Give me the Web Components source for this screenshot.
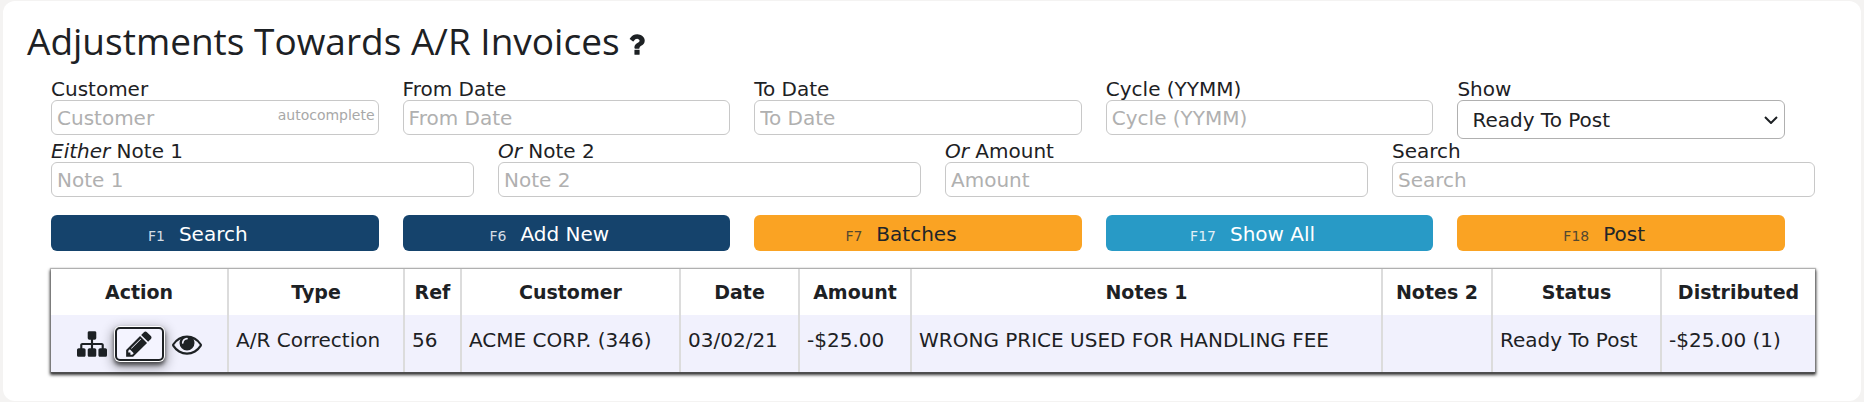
<!DOCTYPE html>
<html lang="en">
<head>
<meta charset="utf-8">
<title>Adjustments Towards A/R Invoices</title>
<style>
  html { background: #f4f3f2; }
  body { margin: 0; padding: 1px 3px; font: 20px/23px "DejaVu Sans", Verdana, sans-serif; color: #1d2124; }
</style>
</head>
<body>
<page-card>
  <span slot="title">Adjustments Towards A/R Invoices</span>
  <field-row inset>
    <text-field placeholder="Customer" hint="autocomplete">Customer</text-field>
    <text-field placeholder="From Date">From Date</text-field>
    <text-field placeholder="To Date">To Date</text-field>
    <text-field placeholder="Cycle (YYMM)">Cycle (YYMM)</text-field>
    <select-field options="Ready To Post">Show</select-field>
  </field-row>
  <field-row>
    <text-field placeholder="Note 1"><i>Either</i> Note 1</text-field>
    <text-field placeholder="Note 2"><i>Or</i> Note 2</text-field>
    <text-field placeholder="Amount"><i>Or</i> Amount</text-field>
    <text-field placeholder="Search">Search</text-field>
  </field-row>
  <field-row inset spaced>
    <key-button key="F1">Search</key-button>
    <key-button key="F6">Add New</key-button>
    <key-button key="F7" tone="amber">Batches</key-button>
    <key-button key="F17" tone="sky">Show All</key-button>
    <key-button key="F18" tone="amber">Post</key-button>
  </field-row>
  <adjustment-table></adjustment-table>
</page-card>

<script>
const ICONS = {
  sitemap: "M1792 1248v320q0 40-28 68t-68 28h-320q-40 0-68-28t-28-68v-320q0-40 28-68t68-28h96v-192h-512v192h96q40 0 68 28t28 68v320q0 40-28 68t-68 28h-320q-40 0-68-28t-28-68v-320q0-40 28-68t68-28h96v-192h-512v192h96q40 0 68 28t28 68v320q0 40-28 68t-68 28h-320q-40 0-68-28t-28-68v-320q0-40 28-68t68-28h96v-192q0-52 38-90t90-38h512v-192h-96q-40 0-68-28t-28-68v-320q0-40 28-68t68-28h320q40 0 68 28t28 68v320q0 40-28 68t-68 28h-96v192h512q52 0 90 38t38 90v192h96q40 0 68 28t28 68z",
  eye: "M1664 960q-152-236-381-353 61 104 61 225 0 185-131.5 316.5t-316.5 131.5-316.5-131.5-131.5-316.5q0-121 61-225-229 117-381 353 133 205 333.5 326.5t434.5 121.5 434.5-121.5 333.5-326.5zm-720-384q0-20-14-34t-34-14q-125 0-214.5 89.5t-89.5 214.5q0 20 14 34t34 14 34-14 14-34q0-86 61-147t147-61q20 0 34-14t14-34zm848 384q0 34-20 69-140 230-376.5 368.5t-499.5 138.5-499.5-139-376.5-368q-20-35-20-69t20-69q140-229 376.5-368t499.5-139 499.5 139 376.5 368q20 35 20 69z",
  pencil: "M491 1536l91-91-235-235-91 91v107h128v128h107zm523-928q0-22-22-22-10 0-17 7l-542 542q-7 7-7 17 0 22 22 22 10 0 17-7l542-542q7-7 7-17zm-54-192l416 416-832 832h-416v-416zm683 96q0 53-37 90l-166 166-416-416 166-165q36-38 90-38 53 0 91 38l235 234q37 39 37 91z",
  question: "M1088 1256v240q0 16-12 28t-28 12h-240q-16 0-28-12t-12-28v-240q0-16 12-28t28-12h240q16 0 28 12t12 28zm316-600q0 54-15.5 101t-35 76.5-55 59.5-57.5 43.5-61 35.5q-41 23-68.5 65t-27.5 67q0 17-12 32.5t-28 15.5h-240q-15 0-25.5-18.5t-10.5-37.5v-45q0-83 65-156.5t143-108.5q59-27 84-56t25-76q0-42-46.5-74t-107.5-32q-65 0-108 29-35 25-107 115-13 16-31 16-12 0-25-8l-164-125q-13-10-15.5-25t5.5-28q160-266 464-266 80 0 161 31t146 83 106 127.5 41 158.5z"
};

class Base extends HTMLElement {
  constructor() { super(); this.attachShadow({ mode: "open" }); }
  connectedCallback() { this.shadowRoot.innerHTML = this.render(); }
  attr(name) { return this.getAttribute(name) || ""; }
}

customElements.define("app-icon", class extends Base {
  render() {
    return `<style>:host{display:block;width:30px;height:30px}svg{display:block;width:100%;height:100%;fill:currentColor}</style>
      <svg viewBox="0 0 1792 1792" aria-hidden="true"><path d="${ICONS[this.attr("name")]}"/></svg>`;
  }
});

customElements.define("page-card", class extends Base {
  render() {
    return `<style>
      :host{display:block;background:#fff;border-radius:12px;padding:12px 46px 29px 48px}
      header{display:flex;align-items:center;gap:2px;margin:0 0 8px -24px}
      h1{margin:0;font:400 37px/56px "Open Sans","Noto Sans",sans-serif}
      a{color:inherit;margin-top:6px}
      app-icon{width:29px;height:29px}
      </style>
      <header><h1><slot name="title"></slot></h1><a href="#help" aria-label="Help"><app-icon name="question"></app-icon></a></header>
      <slot></slot>`;
  }
});

customElements.define("field-row", class extends Base {
  render() {
    return `<style>
      :host{display:grid;grid-auto-flow:column;grid-auto-columns:minmax(0,1fr);gap:24px}
      :host([inset]){margin-right:30px}
      :host([spaced]){margin-top:18px;margin-bottom:18px}
      </style><slot></slot>`;
  }
});

customElements.define("text-field", class extends Base {
  render() {
    const hint = this.attr("hint");
    return `<style>
      :host{display:block}
      label{display:block;padding-top:2px;line-height:21px}
      .box{position:relative}
      input{display:block;box-sizing:border-box;width:100%;height:35px;margin:0;padding:0 5px;border:1px solid #c8c8c8;border-radius:6px;background:#fff;font:inherit;color:inherit}
      input::placeholder{color:#b0b0b0;opacity:1}
      .hint{position:absolute;right:4px;top:5px;font-size:14px;line-height:20px;color:#a8a8a8}
      </style>
      <label for="f"><slot></slot></label>
      <div class="box"><input id="f" type="text" placeholder="${this.attr("placeholder")}">${hint ? `<span class="hint">${hint}</span>` : ""}</div>`;
  }
});

customElements.define("select-field", class extends Base {
  render() {
    return `<style>
      :host{display:block}
      label{display:block;padding-top:2px;line-height:21px}
      .box{display:grid;align-items:center}
      select,svg{grid-area:1/1}
      select{appearance:none;box-sizing:border-box;width:100%;height:39px;margin:0;padding:2px 32px 0 14px;border:1px solid #b0b0b0;border-radius:6px;background:#fff;font:inherit;color:inherit}
      svg{justify-self:end;margin-right:7px;width:14px;height:8px;pointer-events:none;fill:none;stroke:#1d2124;stroke-width:2}
      </style>
      <label for="s"><slot></slot></label>
      <div class="box"><select id="s">${this.attr("options").split(",").map(o => `<option>${o}</option>`).join("")}</select>
      <svg viewBox="0 0 14 8" aria-hidden="true"><path d="M1 1l6 6 6-6"/></svg></div>`;
  }
});

customElements.define("key-button", class extends Base {
  render() {
    return `<style>
      :host{display:block;--bg:#15436c;--fg:#fff;--key:#d5dde5}
      :host([tone=amber]){--bg:#faa323;--fg:#212529;--key:#54482f}
      :host([tone=sky]){--bg:#289ac6;--fg:#fff;--key:#e0f0f7}
      button{display:flex;justify-content:center;align-items:baseline;gap:14px;width:100%;height:36px;margin:0;padding:8px 34px 0 0;border:0;border-radius:6px;background:var(--bg);color:var(--fg);font:inherit}
      small{font-size:14px;color:var(--key)}
      </style>
      <button type="button"><small>${this.attr("key")}</small><span><slot></slot></span></button>`;
  }
});

customElements.define("row-actions", class extends Base {
  render() {
    return `<style>
      :host{display:flex;justify-content:center;align-items:center;gap:8px}
      button{display:grid;place-items:center;margin:0;padding:0;border:0;background:none;color:inherit}
      .current{width:49px;height:34px;border:2px solid #1d2124;border-radius:5px;background:#f4f4ff;box-shadow:0 0 0 1px #fff,0 3px 4px 1px #0009,0 4px 12px 3px #0005}
      </style>
      <button type="button" aria-label="Distribution"><app-icon name="sitemap"></app-icon></button>
      <button type="button" class="current" aria-label="Edit"><app-icon name="pencil"></app-icon></button>
      <button type="button" aria-label="View"><app-icon name="eye"></app-icon></button>`;
  }
});

customElements.define("adjustment-table", class extends Base {
  render() {
    const cols = [["Action", 178], ["Type", 176], ["Ref", 57], ["Customer", 219], ["Date", 119], ["Amount", 112], ["Notes 1", 0], ["Notes 2", 110], ["Status", 169], ["Distributed", 153]];
    const row = ["A/R Correction", "56", "ACME CORP. (346)", "03/02/21", "-$25.00", "WRONG PRICE USED FOR HANDLING FEE", "", "Ready To Post", "-$25.00 (1)"];
    return `<style>
      :host{display:block;box-shadow:0 0 1px 1px #8888,0 1px 1px 0 #000c,0 2px 3px 1px #000c}
      table{width:100%;table-layout:fixed;border-collapse:separate;border-spacing:0;background:#fff}
      th,td{box-sizing:border-box;border-right:2px solid #dcdcdc;white-space:nowrap}
      th:last-child,td:last-child{border-right:0}
      th{height:46px;padding:0;font-size:19px;font-weight:bold;text-align:center}
      td{height:57px;padding:0 0 7px 7px;background:#f1f1fd}
      td:first-child{padding:0}
      </style>
      <table>
        <colgroup>${cols.map(c => `<col${c[1] ? ` style="width:${c[1]}px"` : ""}>`).join("")}</colgroup>
        <thead><tr>${cols.map(c => `<th scope="col">${c[0]}</th>`).join("")}</tr></thead>
        <tbody><tr><td><row-actions></row-actions></td>${row.map(t => `<td>${t}</td>`).join("")}</tr></tbody>
      </table>`;
  }
});
</script>
</body>
</html>
